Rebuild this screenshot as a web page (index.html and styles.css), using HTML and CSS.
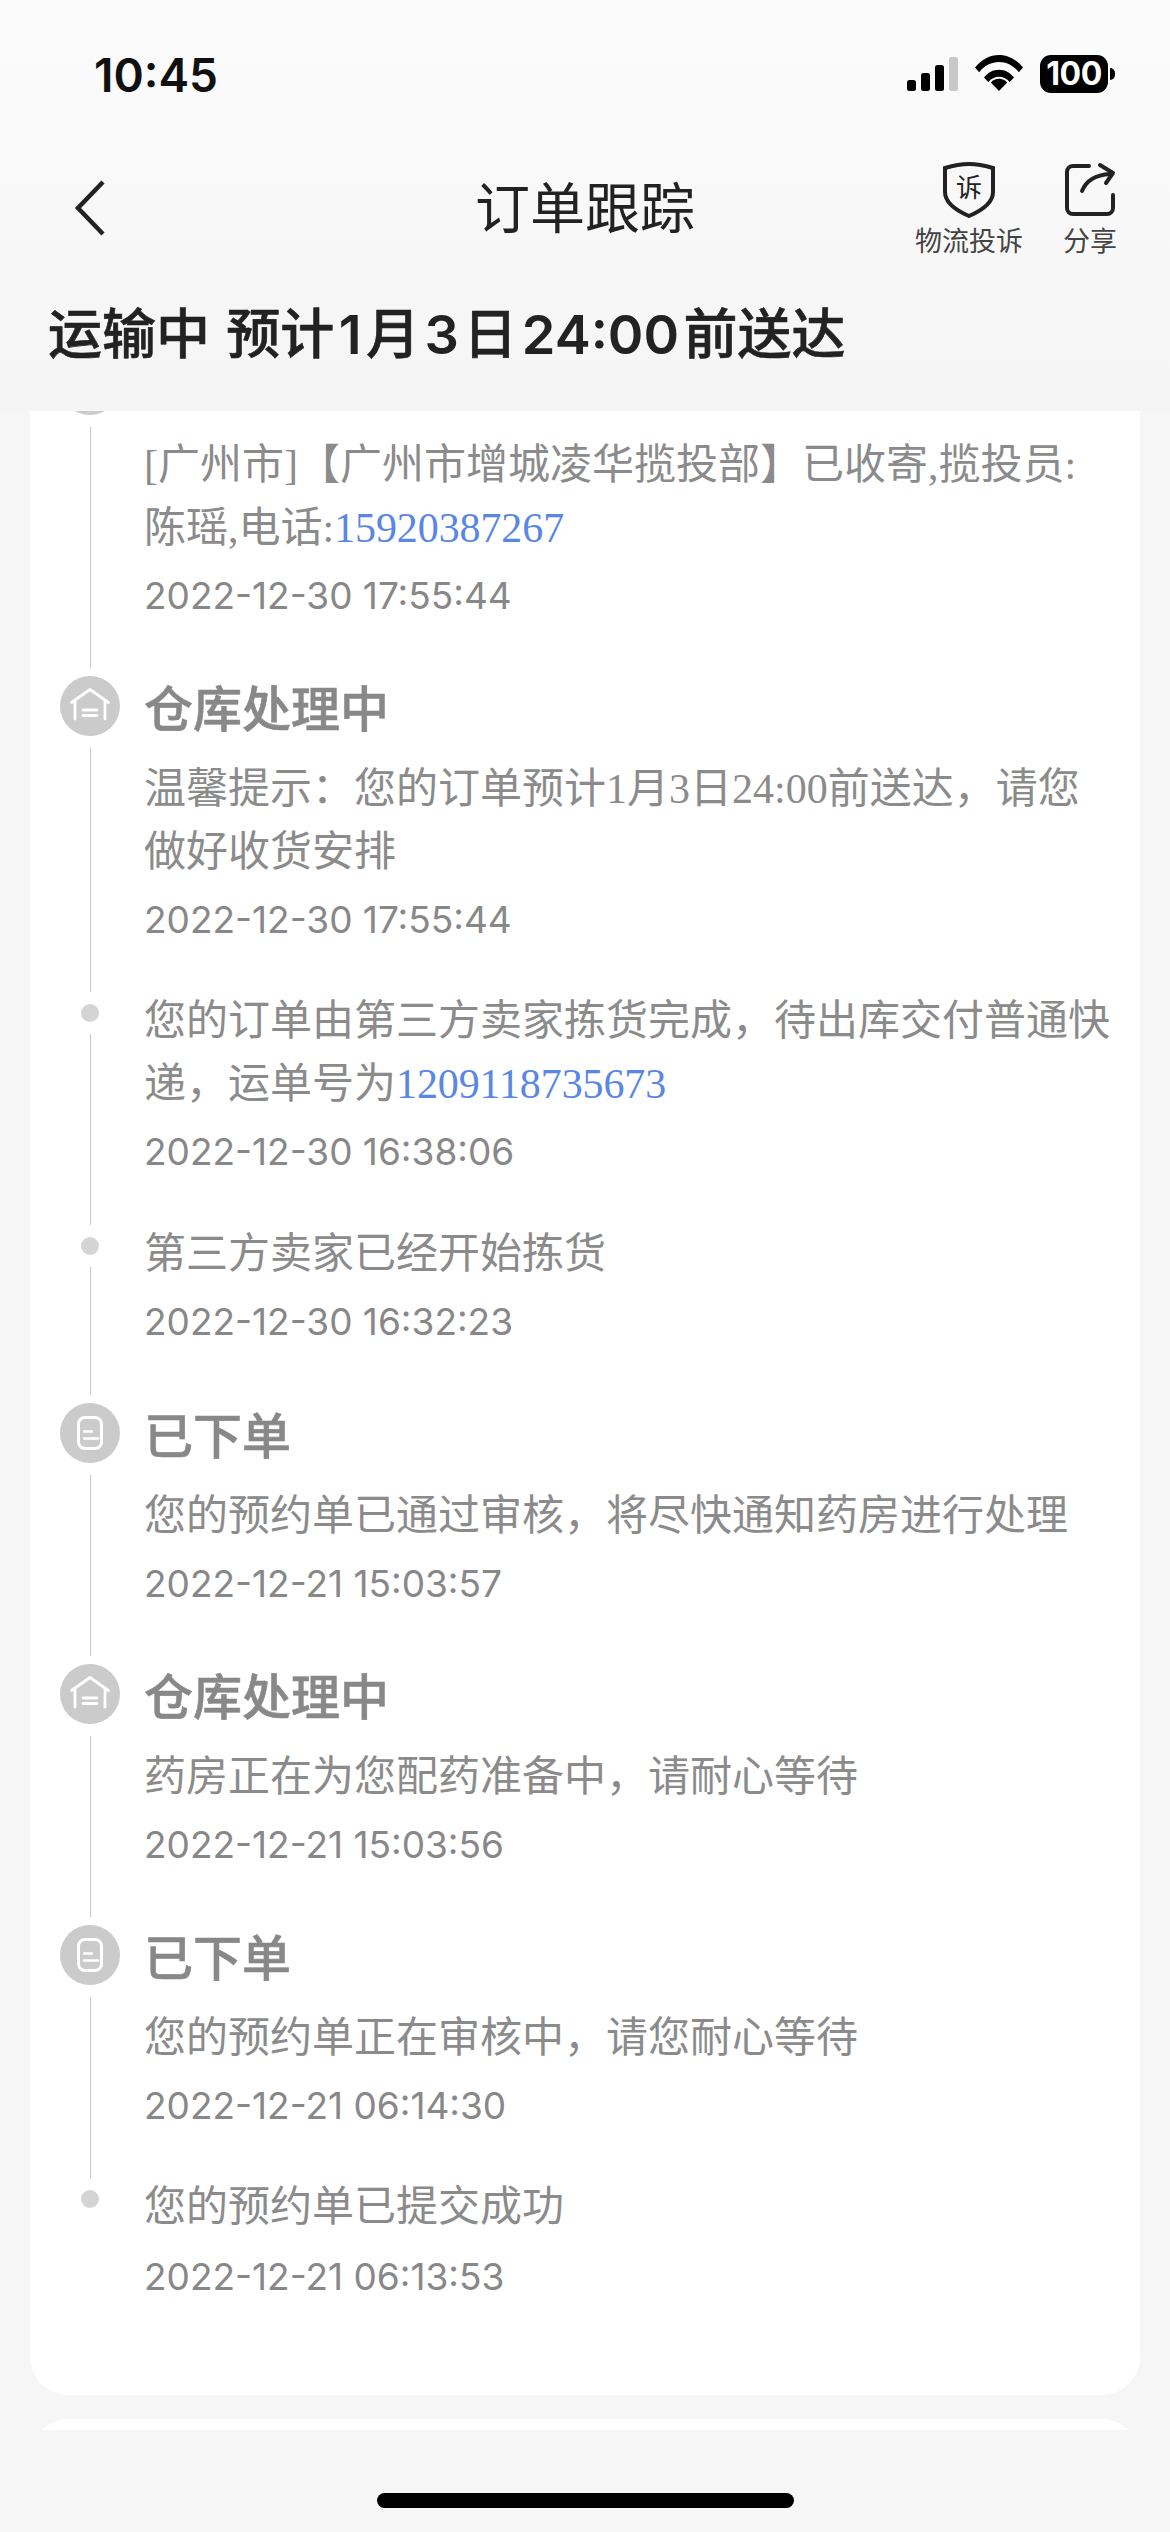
FILE: index.html
```html
<!DOCTYPE html>
<html lang="zh-CN">
<head>
<meta charset="utf-8">
<title>订单跟踪</title>
<link rel="stylesheet" href="styles.css">
</head>
<body>
<div class="page">
  <header class="top">
    <div class="status">
      <span class="clock">10:45</span>
      <div class="status-icons">
        <svg class="signal" width="51" height="34" viewBox="0 0 51 34"><rect x="0" y="23" width="9" height="11" rx="2.5" fill="#000"/><rect x="14" y="16" width="9" height="18" rx="2.5" fill="#000"/><rect x="28" y="8" width="9" height="26" rx="2.5" fill="#000"/><rect x="42" y="0" width="9" height="34" rx="2.5" fill="#c8c8c8"/></svg>
        <svg class="wifi" width="48" height="36" viewBox="0 0 48 36"><path d="M0 12.5C6.5 4.5 15 0 24 0s17.500 4.500 24 12.500l-4.200 4.700C38.500 10.500 31.500 7 24 7S9.500 10.500 4.200 17.200z" fill="#000"/><path d="M9 22.500C13 17.500 18.200 14.800 24 14.800s11 2.700 15 7.700l-4.300 4.600C32 23.700 28.200 21.800 24 21.800s-8 1.900-10.700 5.300z" fill="#000"/><path d="M24 36l-8.200-8.600C18 25 20.800 23.800 24 23.800s6 1.200 8.200 3.600z" fill="#000"/></svg>
        <div class="battery"><span class="battery-level">100</span><span class="battery-nub"></span></div>
      </div>
    </div>
    <nav class="nav">
      <svg class="back" width="32" height="56" viewBox="0 0 32 56"><path d="M29 2 4 28l25 26" fill="none" stroke="#222" stroke-width="4.500"/></svg>
      <h1 class="nav-title">订单跟踪</h1>
      <div class="actions">
        <div class="action action-wide">
          <svg class="action-icon" width="54" height="56" viewBox="0 0 54 56"><path d="M27 2c8 0 16 1.600 24 4v24c0 10-10 18-24 24C13 48 3 40 3 30V6c8-2.400 16-4 24-4z" fill="none" stroke="#222" stroke-width="4"/><text x="27" y="35" class="shield-text">诉</text></svg>
          <span class="action-label">物流投诉</span>
        </div>
        <div class="action">
          <svg class="action-icon" width="54" height="56" viewBox="0 0 54 56"><path d="M26 4H10a6 6 0 0 0-6 6v36a6 6 0 0 0 6 6h34a6 6 0 0 0 6-6V33" fill="none" stroke="#222" stroke-width="4" stroke-linecap="round"/><path d="M19 29C23 19 31 13 47 12M37 3l13 8-7 10" fill="none" stroke="#222" stroke-width="4" stroke-linecap="round" stroke-linejoin="round"/></svg>
          <span class="action-label">分享</span>
        </div>
      </div>
    </nav>
    <h2 class="eta">运输中 预计<span class="n">1</span>月<span class="n">3</span>日<span class="n">24:00</span>前送达</h2>
  </header>

  <main class="scroller">
    <section class="card">
      <ol class="timeline">
        <li class="item major">
          <div class="rail"><span class="badge"></span><span class="line"></span></div>
          <div class="content">
            <div class="title-space"></div>
            <p class="body">[广州市]【广州市增城凌华揽投部】已收寄,揽投员:陈瑶,电话:<span class="link">15920387267</span></p>
            <p class="time">2022-12-30 17:55:44</p>
          </div>
        </li>
        <li class="item major">
          <div class="rail"><span class="badge"><svg width="40" height="40" viewBox="0 0 40 40"><path d="M1.500 16.500 20 3.500l18.500 13M5 14.500V33M35 14.500V33M13 24h14M13 29.500h14" fill="none" stroke="#fff" stroke-width="2.800" stroke-linecap="round" stroke-linejoin="round"/></svg></span><span class="line"></span></div>
          <div class="content">
            <h3 class="title">仓库处理中</h3>
            <p class="body">温馨提示：您的订单预计1月3日24:00前送达，请您做好收货安排</p>
            <p class="time">2022-12-30 17:55:44</p>
          </div>
        </li>
        <li class="item">
          <div class="rail"><span class="dot"></span><span class="line"></span></div>
          <div class="content">
            <p class="body">您的订单由第三方卖家拣货完成，待出库交付普通快递，运单号为<span class="link">1209118735673</span></p>
            <p class="time">2022-12-30 16:38:06</p>
          </div>
        </li>
        <li class="item">
          <div class="rail"><span class="dot"></span><span class="line"></span></div>
          <div class="content">
            <p class="body">第三方卖家已经开始拣货</p>
            <p class="time">2022-12-30 16:32:23</p>
          </div>
        </li>
        <li class="item major">
          <div class="rail"><span class="badge"><svg width="40" height="40" viewBox="0 0 40 40"><rect x="8.500" y="4.500" width="23" height="31" rx="6.500" fill="none" stroke="#fff" stroke-width="3"/><path d="M14 18.500h8M14 25.500h14" fill="none" stroke="#fff" stroke-width="2.400" stroke-linecap="round"/></svg></span><span class="line"></span></div>
          <div class="content">
            <h3 class="title">已下单</h3>
            <p class="body">您的预约单已通过审核，将尽快通知药房进行处理</p>
            <p class="time">2022-12-21 15:03:57</p>
          </div>
        </li>
        <li class="item major">
          <div class="rail"><span class="badge"><svg width="40" height="40" viewBox="0 0 40 40"><path d="M1.500 16.500 20 3.500l18.500 13M5 14.500V33M35 14.500V33M13 24h14M13 29.500h14" fill="none" stroke="#fff" stroke-width="2.800" stroke-linecap="round" stroke-linejoin="round"/></svg></span><span class="line"></span></div>
          <div class="content">
            <h3 class="title">仓库处理中</h3>
            <p class="body">药房正在为您配药准备中，请耐心等待</p>
            <p class="time">2022-12-21 15:03:56</p>
          </div>
        </li>
        <li class="item major">
          <div class="rail"><span class="badge"><svg width="40" height="40" viewBox="0 0 40 40"><rect x="8.500" y="4.500" width="23" height="31" rx="6.500" fill="none" stroke="#fff" stroke-width="3"/><path d="M14 18.500h8M14 25.500h14" fill="none" stroke="#fff" stroke-width="2.400" stroke-linecap="round"/></svg></span><span class="line"></span></div>
          <div class="content">
            <h3 class="title">已下单</h3>
            <p class="body">您的预约单正在审核中，请您耐心等待</p>
            <p class="time">2022-12-21 06:14:30</p>
          </div>
        </li>
        <li class="item last">
          <div class="rail"><span class="dot"></span></div>
          <div class="content">
            <p class="body">您的预约单已提交成功</p>
            <p class="time">2022-12-21 06:13:53</p>
          </div>
        </li>
      </ol>
    </section>
    <section class="card card-next"></section>
  </main>

  <footer class="home-bar"><span class="home-indicator"></span></footer>
</div>
</body>
</html>
```

FILE: styles.css
```css
* { box-sizing: border-box; }
html, body { margin: 0; padding: 0; }
body { background: #f6f6f6; font-family: "Inter", "Noto Sans CJK SC", sans-serif; }
.page { width: 1170px; height: 2532px; display: flex; flex-direction: column; overflow: hidden; }
h1, h2, h3, p, ol { margin: 0; padding: 0; }
ol { list-style: none; }

.top { height: 411px; flex: none; background: linear-gradient(#fbfbfb, #f5f5f5); display: flex; flex-direction: column; }
.status { height: 146px; display: flex; justify-content: space-between; padding: 45px 55px 0 94px; }
.clock { font-size: 46px; font-weight: 600; line-height: 60px; color: #111; }
.status-icons { display: flex; align-items: flex-start; padding-top: 10px; }
.signal { margin: 2px 17px 0 0; }
.wifi { margin-right: 17px; }
.battery { display: flex; align-items: center; }
.battery-level { width: 68px; height: 38px; background: #000; color: #fff; border-radius: 11px; font-size: 32px; font-weight: 700; line-height: 38px; text-align: center; letter-spacing: -0.5px; }
.battery-nub { width: 5px; height: 12px; background: #000; border-radius: 0 6px 6px 0; margin-left: 2px; }

.nav { position: relative; height: 116px; display: flex; align-items: flex-start; justify-content: space-between; padding: 16px 53px 0 74px; }
.back { margin-top: 18px; }
.nav-title { position: absolute; left: 0; right: 0; top: 25px; text-align: center; font-size: 55px; font-weight: 400; line-height: 66px; color: #222; font-family: "Noto Sans CJK SC", sans-serif; }
.actions { display: flex; gap: 40px; }
.action { display: flex; flex-direction: column; align-items: center; }
.action-icon { display: block; }
.action-label { font-size: 27px; line-height: 40px; margin-top: 2px; color: #444; font-family: "Noto Sans CJK SC", sans-serif; }
.shield-text { font-size: 26px; fill: #222; text-anchor: middle; font-family: "Noto Sans CJK SC", sans-serif; }

.eta { font-size: 54px; line-height: 66px; font-weight: 500; color: #222; margin: 36px 0 0 48px; word-spacing: 4px; -webkit-text-stroke: 0.6px #222; font-family: "Noto Sans CJK SC", sans-serif; }
.eta .n { font-family: "Inter", sans-serif; font-weight: 600; margin: 0 4.500px; -webkit-text-stroke: 0; }

.scroller { flex: 1; min-height: 0; overflow: hidden; background: #f6f6f6; }
.card { margin: 0 30px; background: #fff; border-radius: 0 0 38px 38px; height: 1984px; overflow: hidden; padding: 0 28px 0 30px; }
.card-next { margin-top: 24px; border-radius: 38px 38px 0 0; height: 60px; }

.timeline { margin-top: -56px; }
.item { display: flex; }
.item.major { margin-top: 10px; }
.item:first-child { margin-top: 0; }
.rail { width: 60px; flex: none; display: flex; flex-direction: column; align-items: center; }
.badge { width: 60px; height: 60px; flex: none; border-radius: 50%; background: #cbcbcb; display: flex; align-items: center; justify-content: center; }
.dot { width: 18px; height: 18px; flex: none; border-radius: 50%; background: #d4d4d4; margin-top: 14px; }
.line { flex: 1; width: 1px; background: #c8c8c8; margin-top: 12px; margin-bottom: -2px; }
.content { flex: 1; min-width: 0; padding: 0 0 49px 24px; }
.major .content { padding-bottom: 48px; }
.last .content { padding-bottom: 0; }
.title { font-size: 49px; font-weight: 500; line-height: 60px; color: #888; margin: 0 0 22px; -webkit-text-stroke: 0.6px #888; font-family: "Noto Sans CJK SC", sans-serif; }
.title-space { height: 60px; margin-bottom: 19px; }
.body { font-size: 42px; line-height: 63px; color: #8b8b8b; font-family: "Liberation Serif", "Noto Sans CJK SC", serif; }
.link { color: #5a86e4; letter-spacing: -0.1px; }
.time { font-size: 37px; line-height: 44px; margin-top: 14px; color: #888; font-family: "Inter", sans-serif; }
.last .time { margin-top: 16px; }

.home-bar { height: 102px; flex: none; background: #f6f6f6; display: flex; justify-content: center; padding-top: 63px; }
.home-indicator { width: 417px; height: 15px; border-radius: 8px; background: #000; }
```
